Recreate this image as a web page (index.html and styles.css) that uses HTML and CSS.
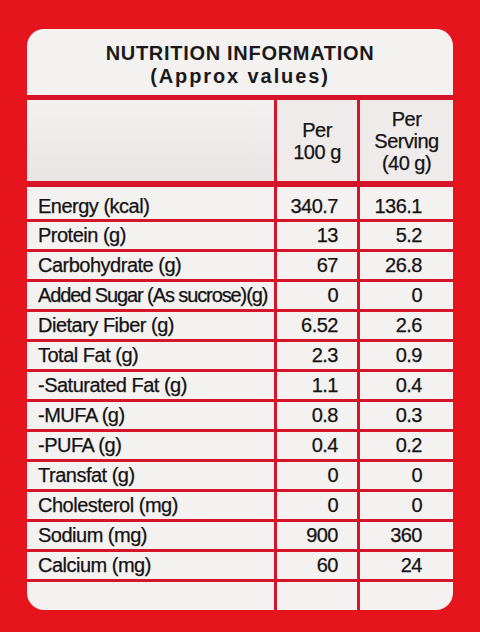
FILE: index.html
```html
<!DOCTYPE html>
<html lang="en">
<head>
<meta charset="utf-8">
<title>Nutrition Information</title>
<link rel="stylesheet" href="styles.css">
</head>
<body>
<div class="panel">
  <div class="title">
    <div class="title-main">NUTRITION INFORMATION</div>
    <div class="title-sub">(Approx values)</div>
  </div>
  <div class="thead">
    <div class="hcell"></div>
    <div class="hcell"><span>Per</span><span>100 g</span></div>
    <div class="hcell"><span>Per</span><span>Serving</span><span>(40 g)</span></div>
  </div>
  <div class="tbody">
    <div class="cell label first">Energy (kcal)</div><div class="cell v1 first">340.7</div><div class="cell v2 first">136.1</div>
    <div class="cell label">Protein (g)</div><div class="cell v1">13</div><div class="cell v2">5.2</div>
    <div class="cell label">Carbohydrate (g)</div><div class="cell v1">67</div><div class="cell v2">26.8</div>
    <div class="cell label tight">Added Sugar (As sucrose)(g)</div><div class="cell v1">0</div><div class="cell v2">0</div>
    <div class="cell label">Dietary Fiber (g)</div><div class="cell v1">6.52</div><div class="cell v2">2.6</div>
    <div class="cell label">Total Fat (g)</div><div class="cell v1">2.3</div><div class="cell v2">0.9</div>
    <div class="cell label">-Saturated Fat (g)</div><div class="cell v1">1.1</div><div class="cell v2">0.4</div>
    <div class="cell label">-MUFA (g)</div><div class="cell v1">0.8</div><div class="cell v2">0.3</div>
    <div class="cell label">-PUFA (g)</div><div class="cell v1">0.4</div><div class="cell v2">0.2</div>
    <div class="cell label">Transfat (g)</div><div class="cell v1">0</div><div class="cell v2">0</div>
    <div class="cell label">Cholesterol (mg)</div><div class="cell v1">0</div><div class="cell v2">0</div>
    <div class="cell label">Sodium (mg)</div><div class="cell v1">900</div><div class="cell v2">360</div>
    <div class="cell label">Calcium (mg)</div><div class="cell v1">60</div><div class="cell v2">24</div>
    <div class="cell label"></div><div class="cell v1"></div><div class="cell v2"></div>
  </div>
</div>
</body>
</html>
```

FILE: styles.css
```css
html, body {
  margin: 0;
  padding: 0;
}
body {
  width: 480px;
  height: 632px;
  overflow: hidden;
  background: #e6151d;
  font-family: "Liberation Sans", Arial, sans-serif;
  color: #141212;
}
.panel {
  margin: 29px 0 0 27px;
  width: 426px;
  background: #d6152a;
  border-radius: 17px;
  overflow: hidden;
  display: flex;
  flex-direction: column;
}
.title {
  height: 66px;
  background: #f4f1f1;
  display: flex;
  flex-direction: column;
  align-items: center;
  box-sizing: border-box;
  padding-top: 13px;
  font-weight: bold;
  font-size: 20px;
  line-height: 22.5px;
  color: #1b1919;
}
.title-main {
  letter-spacing: 0.7px;
}
.title-sub {
  letter-spacing: 1.9px;
}
.thead {
  margin-top: 5px;
  display: grid;
  grid-template-columns: 247px 80px 93px;
  column-gap: 3px;
  height: 81px;
}
.hcell {
  background: #efebeb;
  display: flex;
  flex-direction: column;
  align-items: center;
  justify-content: center;
  font-size: 20px;
  line-height: 22px;
  letter-spacing: -0.5px;
  -webkit-text-stroke: 0.25px currentColor;
}
.hcell:first-child {
  background: linear-gradient(180deg, #f3f0f0, #e9e5e5);
}
.tbody {
  margin-top: 6px;
  display: grid;
  grid-template-columns: 247px 80px 93px;
  grid-template-rows: 32px repeat(12, 27px) 28px;
  gap: 3px;
}
.cell {
  background: #f4f1f1;
  font-size: 20px;
  line-height: 27px;
  letter-spacing: -0.5px;
  -webkit-text-stroke: 0.25px currentColor;
  white-space: nowrap;
  box-sizing: border-box;
}
.cell.first {
  padding-top: 6px;
}
.label {
  padding-left: 11px;
}
.label.tight {
  letter-spacing: -1.1px;
}
.v1 {
  text-align: right;
  padding-right: 19px;
}
.v2 {
  text-align: right;
  padding-right: 31px;
}
```
